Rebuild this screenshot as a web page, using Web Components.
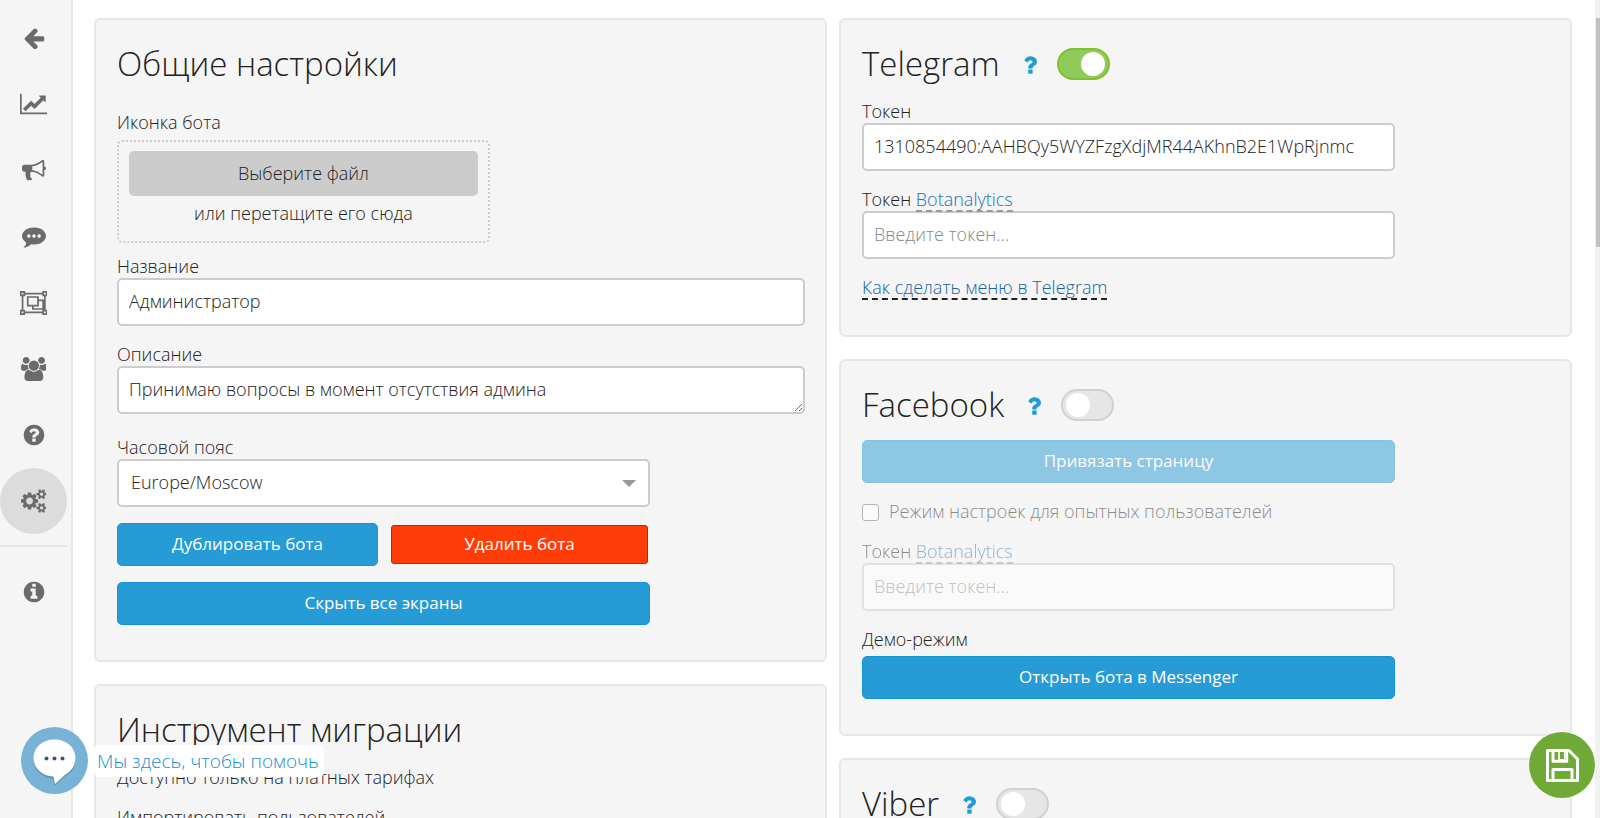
<!DOCTYPE html>
<html lang="ru">
<head>
<meta charset="utf-8">
<meta name="viewport" content="width=device-width, initial-scale=1">
<title>Настройки бота</title>
<style>
    body {
        margin: 0;
        font-family: 'Open Sans', 'Noto Sans', sans-serif;
        font-size: 18px;
        font-weight: 300;
        line-height: 24px;
        color: #222;
        background: #fff;
    }
</style>
</head>
<body>
<settings-page>
    <side-nav slot="nav"></side-nav>

    <settings-card slot="left" heading="Общие настройки">
        <file-drop label="Иконка бота"></file-drop>
        <text-field label="Название" value="Администратор" wide></text-field>
        <text-field label="Описание" value="Принимаю вопросы в момент отсутствия админа" multiline wide></text-field>
        <select-field label="Часовой пояс" value="Europe/Moscow"></select-field>
        <button-row>
            <action-button>Дублировать бота</action-button>
            <action-button kind="danger">Удалить бота</action-button>
        </button-row>
        <action-button>Скрыть все экраны</action-button>
    </settings-card>

    <settings-card slot="left" heading="Инструмент миграции">
        <text-line>Доступно только на платных тарифах</text-line>
        <text-line>Импортировать пользователей</text-line>
    </settings-card>

    <settings-card slot="right" heading="Telegram">
        <help-link slot="tools" topic="Telegram"></help-link>
        <toggle-switch slot="tools" label="Telegram" checked></toggle-switch>
        <text-field label="Токен" value="1310854490:AAHBQy5WYZFzgXdjMR44AKhnB2E1WpRjnmc"></text-field>
        <text-field label="Токен" placeholder="Введите токен..."><a href="#botanalytics">Botanalytics</a></text-field>
        <text-line><a href="#telegram-menu">Как сделать меню в Telegram</a></text-line>
    </settings-card>

    <settings-card slot="right" heading="Facebook">
        <help-link slot="tools" topic="Facebook"></help-link>
        <toggle-switch slot="tools" label="Facebook"></toggle-switch>
        <action-button disabled>Привязать страницу</action-button>
        <check-field label="Режим настроек для опытных пользователей" disabled></check-field>
        <text-field label="Токен" placeholder="Введите токен..." disabled><a href="#botanalytics">Botanalytics</a></text-field>
        <action-button caption="Демо-режим">Открыть бота в Messenger</action-button>
    </settings-card>

    <settings-card slot="right" heading="Viber">
        <help-link slot="tools" topic="Viber"></help-link>
        <toggle-switch slot="tools" label="Viber"></toggle-switch>
    </settings-card>

    <chat-widget slot="overlay">Мы здесь, чтобы помочь</chat-widget>
    <save-button slot="overlay"></save-button>
</settings-page>

<script>
// attach an open shadow root and fill it
function render(el, html) {
    const root = el.attachShadow({ mode: 'open' });
    const template = document.createElement('template');
    template.innerHTML = `<style>*, :host { box-sizing: border-box; } :host([hidden]) { display: none; }</style>${html}`;
    root.appendChild(template.content.cloneNode(true));
    return root;
}

// shared look of inputs, textareas and selects
const controlStyle = `
    label { display: block; height: 24px; color: #222; white-space: nowrap; }
    .control {
        display: block;
        width: 100%;
        height: 48px;
        margin: 0;
        padding: 9px 10px 11px;
        border: 2px solid #ccc;
        border-radius: 5px;
        background: #fff;
        color: #222;
        font: inherit;
        line-height: 24px;
    }
    .control::placeholder { color: #888; opacity: 1; }
`;

const icons = {
    back: ['0 0 1792 1792', 'M1664 896v128q0 53-32.5 90.5t-84.5 37.5h-704l293 294q38 36 38 90t-38 90l-75 76q-37 37-90 37-52 0-91-37l-651-652q-37-37-37-90 0-52 37-91l651-650q38-38 91-38 52 0 90 38l75 74q38 38 38 91t-38 91l-293 293h704q52 0 84.5 37.5t32.5 90.5z'],
    chart: ['0 0 2048 1792', 'M2048 1536v128h-2048v-1536h128v1408h1920zm-128-1248v435q0 21-19.5 29.5t-35.5-7.5l-121-121-633 633q-10 10-23 10t-23-10l-233-233-416 416-192-192 585-585q10-10 23-10t23 10l233 233 464-464-121-121q-16-16-7.5-35.5t29.5-19.5h435q14 0 23 9t9 23z'],
    horn: ['0 0 1792 1792', 'M1664 640q53 0 90.5 37.5t37.5 90.5-37.5 90.5-90.5 37.5v384q0 52-38 90t-90 38q-417-347-812-380-58 19-91 66t-31 100.5 40 92.5q-20 33-23 65.5t6 58 33.5 55 48 50 61.5 50.5q-29 58-111.5 83t-168.5 11.5-132-55.5q-7-23-29.5-87.5t-32-94.5-23-89-15-101 3.5-98.5 22-110.5h-122q-66 0-113-47t-47-113v-192q0-66 47-113t113-47h480q435 0 896-384 52 0 90 38t38 90v384zm-128 604v-954q-394 302-768 343v270q377 42 768 341z'],
    chat: ['0 0 1792 1792', 'M640 896q0-53-37.5-90.5t-90.5-37.5-90.5 37.5-37.5 90.5 37.5 90.5 90.5 37.5 90.5-37.5 37.5-90.5zm384 0q0-53-37.5-90.5t-90.5-37.5-90.5 37.5-37.5 90.5 37.5 90.5 90.5 37.5 90.5-37.5 37.5-90.5zm384 0q0-53-37.5-90.5t-90.5-37.5-90.5 37.5-37.5 90.5 37.5 90.5 90.5 37.5 90.5-37.5 37.5-90.5zm384 0q0 174-120 321.5t-326 233-450 85.5q-110 0-211-18-173 173-435 229-52 10-86 13-12 1-22-6t-13-18q-4-15 20-37 5-5 23.5-21.5t25.5-23.5 23.5-25.5 24-31.5 20.5-37 20-48 14.5-57.5 12.5-72.5q-146-90-229.5-216.5t-83.5-269.5q0-174 120-321.5t326-233 450-85.5 450 85.5 326 233 120 321.5z'],
    group: ['0 0 2048 1792', 'M2048 384h-128v1024h128v384h-384v-128h-1280v128h-384v-384h128v-1024h-128v-384h384v128h1280v-128h384v384zm-256-256v128h128v-128h-128zm-1664 0v128h128v-128h-128zm128 1536v-128h-128v128h128zm1408-128v-128h128v-1024h-128v-128h-1280v128h-128v1024h128v128h1280zm256 128v-128h-128v128h128zm-512-1024h384v768h-896v-256h-384v-768h896v256zm-768 384h640v-512h-640v512zm1024 256v-512h-256v384h-384v128h640z'],
    users: ['-64 0 1920 1792', 'M529 896q-162 5-265 128h-134q-82 0-138-40.5t-56-118.5q0-353 124-353 6 0 43.5 21t97.5 42.5 119 21.5q67 0 133-23-5 37-5 66 0 139 81 256zm1071 637q0 120-73 189.5t-194 69.5h-874q-121 0-194-69.5t-73-189.5q0-53 3.5-103.5t14-109 26.5-108.5 43-97.5 62-81 85.5-53.5 111.5-20q10 0 43 21.5t73 48 107 48 135 21.5 135-21.5 107-48 73-48 43-21.5q61 0 111.5 20t85.5 53.5 62 81 43 97.5 26.5 108.5 14 109 3.5 103.5zm-1024-1277q0 106-75 181t-181 75-181-75-75-181 75-181 181-75 181 75 75 181zm704 384q0 159-112.5 271.5t-271.5 112.5-271.5-112.5-112.5-271.5 112.5-271.5 271.5-112.5 271.5 112.5 112.5 271.5zm576 225q0 78-56 118.5t-138 40.5h-134q-103-123-265-128 81-117 81-256 0-29-5-66 66 23 133 23 59 0 119-21.5t97.5-42.5 43.5-21q124 0 124 353zm-128-609q0 106-75 181t-181 75-181-75-75-181 75-181 181-75 181 75 75 181z'],
    help: ['0 0 1792 1792', 'M1024 1376v-192q0-14-9-23t-23-9h-192q-14 0-23 9t-9 23v192q0 14 9 23t23 9h192q14 0 23-9t9-23zm256-672q0-88-55.5-163t-138.5-116-170-41q-243 0-371 213-15 24 8 42l132 100q7 6 19 6 16 0 25-12 53-68 86-92 34-24 86-24 48 0 85.5 26t37.5 59q0 38-20 61t-68 45q-63 28-115.5 86.5t-52.5 125.5v36q0 14 9 23t23 9h192q14 0 23-9t9-23q0-19 21.5-49.5t54.5-49.5q32-18 49-28.5t46-35 44.5-48 28-60.5 12.5-81zm384 192q0 209-103 385.5t-279.5 279.5-385.5 103-385.5-103-279.5-279.5-103-385.5 103-385.5 279.5-279.5 385.5-103 385.5 103 279.5 279.5 103 385.5z'],
    cogs: ['-64 0 1920 1792', 'M832 896q0-106-75-181t-181-75-181 75-75 181 75 181 181 75 181-75 75-181zm768 512q0-52-38-90t-90-38-90 38-38 90q0 53 37.5 90.5t90.5 37.5 90.5-37.5 37.5-90.5zm0-1024q0-52-38-90t-90-38-90 38-38 90q0 53 37.5 90.5t90.5 37.5 90.5-37.5 37.5-90.5zm-384 421v185q0 10-7 19.5t-16 10.5l-155 24q-11 35-32 76 34 48 90 115 7 11 7 20 0 12-7 19-23 30-82.5 89.5t-78.5 59.5q-11 0-21-7l-115-90q-37 19-77 31-11 108-23 155-7 24-30 24h-186q-11 0-20-7.5t-10-17.5l-23-153q-34-10-75-31l-118 89q-7 7-20 7-11 0-21-8-144-133-144-160 0-9 7-19 10-14 41-53t47-61q-23-44-35-82l-152-24q-10-1-17-9.5t-7-19.5v-185q0-10 7-19.5t16-10.5l155-24q11-35 32-76-34-48-90-115-7-11-7-20 0-12 7-20 22-30 82-89t79-59q11 0 21 7l115 90q34-18 77-32 11-108 23-154 7-24 30-24h186q11 0 20 7.5t10 17.5l23 153q34 10 75 31l118-89q8-7 20-7 11 0 21 8 144 133 144 160 0 8-7 19-12 16-42 54t-45 60q23 48 34 82l152 23q10 2 17 10.5t7 19.5zm640 533v140q0 16-149 31-12 27-30 52 51 113 51 138 0 4-4 7-122 71-124 71-8 0-46-47t-52-68q-20 2-30 2t-30-2q-14 21-52 68t-46 47q-2 0-124-71-4-3-4-7 0-25 51-138-18-25-30-52-149-15-149-31v-140q0-16 149-31 13-29 30-52-51-113-51-138 0-4 4-7 4-2 35-20t59-34 30-16q8 0 46 46.5t52 67.5q20-2 30-2t30 2q51-71 92-112l6-2q4 0 124 70 4 3 4 7 0 25-51 138 17 23 30 52 149 15 149 31zm0-1024v140q0 16-149 31-12 27-30 52 51 113 51 138 0 4-4 7-122 71-124 71-8 0-46-47t-52-68q-20 2-30 2t-30-2q-14 21-52 68t-46 47q-2 0-124-71-4-3-4-7 0-25 51-138-18-25-30-52-149-15-149-31v-140q0-16 149-31 13-29 30-52-51-113-51-138 0-4 4-7 4-2 35-20t59-34 30-16q8 0 46 46.5t52 67.5q20-2 30-2t30 2q51-71 92-112l6-2q4 0 124 70 4 3 4 7 0 25-51 138 17 23 30 52 149 15 149 31z'],
    info: ['0 0 1792 1792', 'M1152 1376v-160q0-14-9-23t-23-9h-96v-512q0-14-9-23t-23-9h-320q-14 0-23 9t-9 23v160q0 14 9 23t23 9h96v320h-96q-14 0-23 9t-9 23v160q0 14 9 23t23 9h448q14 0 23-9t9-23zm-128-896v-160q0-14-9-23t-23-9h-192q-14 0-23 9t-9 23v160q0 14 9 23t23 9h192q14 0 23-9t9-23zm640 416q0 209-103 385.5t-279.5 279.5-385.5 103-385.5-103-279.5-279.5-103-385.5 103-385.5 279.5-279.5 385.5-103 385.5 103 279.5 279.5 103 385.5z'],
    question: ['384 256 1024 1280', 'M1088 1256v240q0 16-12 28t-28 12h-240q-16 0-28-12t-12-28v-240q0-16 12-28t28-12h240q16 0 28 12t12 28zm316-600q0 54-15.5 101t-35 76.5-55 59.5-57.5 43.5-61 35.5q-41 23-68.5 65t-27.5 67q0 17-12 32.5t-28 15.5h-240q-15 0-25.5-18.5t-10.5-37.5v-45q0-83 65-156.5t143-108.5q59-27 84-56t25-76q0-42-46.5-74t-107.5-32q-65 0-108 29-35 25-107 115-13 16-31 16-12 0-25-8l-164-125q-13-10-15.5-25t5.5-28q160-266 464-266 80 0 161 31t146 83 106 127.5 41 158.5z']
};

function icon(name) {
    const [box, path] = icons[name];
    return `<svg viewBox="${box}" fill="currentColor" aria-hidden="true"><path d="${path}"/></svg>`;
}

class SettingsPage extends HTMLElement {
    constructor() {
        super();
        render(this, `
            <style>
                :host { display: flex; height: 100vh; overflow: hidden; }
                main {
                    flex: 1;
                    display: grid;
                    grid-template-columns: 1fr 1fr;
                    gap: 12px;
                    padding: 18px 23px 0 21px;
                    overflow: hidden;
                }
                .column { display: flex; flex-direction: column; gap: 22px; min-width: 0; }
                .track { width: 5px; padding: 18px 0 0 1px; background: #f1f1f1; }
                .thumb { height: 28vh; background: #c1c1c1; }
            </style>
            <slot name="nav"></slot>
            <main>
                <div class="column"><slot name="left"></slot></div>
                <div class="column"><slot name="right"></slot></div>
            </main>
            <div class="track"><div class="thumb"></div></div>
            <slot name="overlay"></slot>
        `);
    }
}

class SideNav extends HTMLElement {
    constructor() {
        super();
        const link = ([name, title]) => `<a href="#${name}" aria-label="${title}"${name === 'cogs' ? ' class="active"' : ''}>${icon(name)}</a>`;
        const top = [['back', 'Назад'], ['chart', 'Статистика'], ['horn', 'Рассылки'], ['chat', 'Диалоги']];
        const middle = [['group', 'Экраны'], ['users', 'Пользователи'], ['help', 'Помощь'], ['cogs', 'Настройки']];
        render(this, `
            <style>
                :host {
                    display: block;
                    flex: none;
                    width: 73px;
                    padding-top: 5px;
                    border-right: 2px solid #e7e7e7;
                    background: #f5f5f5;
                }
                nav { width: 67px; }
                div + div { margin-top: 1px; }
                a {
                    display: flex;
                    align-items: center;
                    justify-content: center;
                    height: 66px;
                    border-radius: 50%;
                    color: #6b6b6b;
                }
                .active { background: #dcdcdc; }
                svg { height: 24px; }
                hr { height: 2px; margin: 11px 0 12px; border: 0; background: #e4e4e4; }
            </style>
            <nav>
                <div>${top.map(link).join('')}</div>
                <div>${middle.map(link).join('')}</div>
                <hr>
                ${link(['info', 'О сервисе'])}
            </nav>
        `);
    }
}

class SettingsCard extends HTMLElement {
    constructor() {
        super();
        render(this, `
            <style>
                :host {
                    display: block;
                    padding: 20px 20px 35px 21px;
                    border: 2px solid #e7e7e7;
                    border-radius: 6px;
                    background: #f5f5f5;
                }
                header { display: flex; align-items: center; gap: 20px; height: 48px; margin-bottom: 11px; }
                h2 { margin: 0; font-size: 33px; font-weight: 300; line-height: 48px; white-space: nowrap; }
                .body { display: flex; flex-direction: column; gap: 16px; }
            </style>
            <header><h2>${this.getAttribute('heading')}</h2><slot name="tools"></slot></header>
            <div class="body"><slot></slot></div>
        `);
    }
}

class TextField extends HTMLElement {
    constructor() {
        super();
        const value = this.getAttribute('value') || '';
        const off = this.hasAttribute('disabled') ? 'disabled' : '';
        const control = this.hasAttribute('multiline')
            ? `<textarea id="control" class="control" rows="1">${value}</textarea>`
            : `<input id="control" class="control" type="text" value="${value}" placeholder="${this.getAttribute('placeholder') || ''}" ${off}>`;
        render(this, `
            <style>
                ${controlStyle}
                :host { display: block; max-width: 533px; }
                :host([wide]) { max-width: none; }
                :host([multiline]) { padding-bottom: 5px; }
                :host([disabled]) { opacity: .5; }
                label { position: relative; z-index: 1; }
                textarea { overflow: hidden; resize: both; }
                ::slotted(a) {
                    display: inline-block;
                    line-height: 22px;
                    color: #2272b4;
                    text-decoration: none;
                    border-bottom: 2px dashed #999;
                }
            </style>
            <label for="control">${this.getAttribute('label')} <slot></slot></label>
            ${control}
        `);
    }
}

class SelectField extends HTMLElement {
    constructor() {
        super();
        render(this, `
            <style>
                ${controlStyle}
                :host { display: block; max-width: 533px; }
                .box { display: grid; align-items: center; }
                .box > * { grid-area: 1 / 1; }
                select.control { appearance: none; padding: 0 12px 2px; }
                .arrow {
                    justify-self: end;
                    margin-right: 14px;
                    border: 7px solid transparent;
                    border-top-color: #999;
                    border-bottom: 0;
                    pointer-events: none;
                }
            </style>
            <label for="control">${this.getAttribute('label')}</label>
            <div class="box">
                <select id="control" class="control"><option>${this.getAttribute('value')}</option></select>
                <span class="arrow"></span>
            </div>
        `);
    }
}

class CheckField extends HTMLElement {
    constructor() {
        super();
        render(this, `
            <style>
                :host { display: block; }
                :host([disabled]) { opacity: .5; }
                label { display: flex; align-items: center; gap: 10px; color: #222; white-space: nowrap; }
                input {
                    appearance: none;
                    width: 17px;
                    height: 17px;
                    margin: 3px 0 0;
                    border: 1px solid #777;
                    border-radius: 3px;
                    background: #fff;
                }
            </style>
            <label><input type="checkbox" ${this.hasAttribute('disabled') ? 'disabled' : ''}>${this.getAttribute('label')}</label>
        `);
    }
}

class FileDrop extends HTMLElement {
    constructor() {
        super();
        const root = render(this, `
            <style>
                :host { display: block; max-width: 373px; padding-top: 11px; margin-bottom: -5px; }
                label { display: block; margin-bottom: 6px; color: #222; }
                .zone {
                    height: 103px;
                    padding: 9px 10px;
                    border: 2px dotted #ccc;
                    border-radius: 5px;
                    text-align: center;
                    color: #222;
                }
                button {
                    display: block;
                    width: 100%;
                    height: 45px;
                    margin-bottom: 5px;
                    padding: 0 0 2px;
                    border: 0;
                    border-radius: 5px;
                    background: #ccc;
                    color: #222;
                    font: inherit;
                }
            </style>
            <label for="pick">${this.getAttribute('label')}</label>
            <div class="zone">
                <button id="pick" type="button">Выберите файл</button>
                или перетащите его сюда
                <input type="file" hidden>
            </div>
        `);
        root.querySelector('button').addEventListener('click', () => root.querySelector('input').click());
    }
}

class ButtonRow extends HTMLElement {
    constructor() {
        super();
        render(this, `
            <style>
                :host { display: grid; grid-template-columns: 1fr 1fr; align-items: center; gap: 11px; max-width: 533px; }
            </style>
            <slot></slot>
        `);
    }
}

class ActionButton extends HTMLElement {
    constructor() {
        super();
        const caption = this.getAttribute('caption');
        render(this, `
            <style>
                :host { display: block; max-width: 533px; }
                :host([disabled]) { opacity: .5; }
                :host([kind="danger"]) { padding: 0 2px; }
                p { margin: 0 0 5px; color: #222; }
                button {
                    display: block;
                    width: 100%;
                    height: 43px;
                    padding: 0 0 2px;
                    border: 1px solid #1494d4;
                    border-radius: 5px;
                    background: #279bd5;
                    color: #fff;
                    font: inherit;
                    font-size: 17px;
                    font-weight: 500;
                }
                :host([kind="danger"]) button {
                    height: 39px;
                    border-color: #f01000;
                    border-radius: 3px;
                    background: #ff3d08;
                }
            </style>
            ${caption ? `<p>${caption}</p>` : ''}
            <button type="button" ${this.hasAttribute('disabled') ? 'disabled' : ''}><slot></slot></button>
        `);
    }
}

class TextLine extends HTMLElement {
    constructor() {
        super();
        render(this, `
            <style>
                :host { display: block; color: #222; }
                ::slotted(a) {
                    display: inline-block;
                    line-height: 22px;
                    color: #1a64a2;
                    text-decoration: none;
                    border-bottom: 2px dashed #222;
                }
            </style>
            <slot></slot>
        `);
    }
}

class HelpLink extends HTMLElement {
    constructor() {
        super();
        render(this, `
            <style>
                :host { display: block; padding: 2px 0 0 3px; }
                a { display: block; color: #1c9cd9; }
                svg { display: block; width: 14px; height: 18px; }
            </style>
            <a href="#help" aria-label="Справка ${this.getAttribute('topic')}">${icon('question')}</a>
        `);
    }
}

class ToggleSwitch extends HTMLElement {
    constructor() {
        super();
        render(this, `
            <style>
                :host { display: block; }
                input {
                    appearance: none;
                    display: flex;
                    align-items: center;
                    width: 53px;
                    height: 32px;
                    margin: 0;
                    padding: 0 3px;
                    border: 2px solid #d0d0d0;
                    border-radius: 16px;
                    background: #e6e6e6;
                }
                input::before {
                    content: '';
                    width: 24px;
                    height: 24px;
                    border-radius: 50%;
                    background: #fff;
                }
                input:checked {
                    justify-content: flex-end;
                    border-color: #7fc22c;
                    background: #8fca5a;
                }
            </style>
            <input type="checkbox" role="switch" aria-label="${this.getAttribute('label')}" ${this.hasAttribute('checked') ? 'checked' : ''}>
        `);
    }
}

class ChatWidget extends HTMLElement {
    constructor() {
        super();
        render(this, `
            <style>
                :host { position: fixed; left: 21px; bottom: 24px; z-index: 2; }
                button {
                    display: flex;
                    align-items: center;
                    gap: 6px;
                    padding: 0;
                    border: 0;
                    background: none;
                    color: #1a90d2;
                    font: inherit;
                    font-size: 19px;
                }
                svg { display: block; width: 67px; height: 67px; }
                span { padding: 4px 5px 4px 3px; border-radius: 5px; background: #fff; }
            </style>
            <button type="button">
                <svg viewBox="0 0 67 67" aria-hidden="true">
                    <circle cx="33.5" cy="33.5" r="33.5" fill="#78b2d6"/>
                    <path d="M33.5 14.5c11.800 0 21 8 21 18.500 0 7.500-4.500 13.500-10.500 16.500l-10.500 9.500-2-7.500c-10.500-.5-19-8.500-19-18.500 0-10.500 9.200-18.500 21-18.500z" fill="#50748c" opacity=".45"/>
                    <path d="M33.5 12.500c11.800 0 21 8 21 18.500 0 7.500-4.500 13.500-10.500 16.800l-10 9.200-1.500-7.500c-11-.3-20-8.200-20-18.500 0-10.500 9.200-18.500 21-18.500z" fill="#fff"/>
                    <g fill="#46516b"><circle cx="25.500" cy="31.500" r="2"/><circle cx="33.500" cy="31.500" r="2"/><circle cx="41.500" cy="31.500" r="2"/></g>
                </svg>
                <span><slot></slot></span>
            </button>
        `);
    }
}

class SaveButton extends HTMLElement {
    constructor() {
        super();
        render(this, `
            <style>
                :host { position: fixed; right: 5px; bottom: 20px; z-index: 2; }
                button {
                    display: flex;
                    align-items: center;
                    justify-content: center;
                    width: 66px;
                    height: 66px;
                    padding: 0;
                    border: 0;
                    border-radius: 50%;
                    background: #70aa36;
                }
                svg { width: 33px; height: 33px; }
            </style>
            <button type="button" aria-label="Сохранить">
                <svg viewBox="0 0 33 33" fill="none" stroke="#fff" stroke-width="3" stroke-linejoin="round" aria-hidden="true">
                    <path d="M1.5 1.5H23L31.500 10v21.500h-30z"/>
                    <path d="M7 2v10.200h13.700V2M7 31V20.500h19V31"/>
                    <path d="M12.200 3h7v8h-7z" fill="#fff" stroke="none"/>
                    <path d="M14 3h4v7h-4z" fill="#70aa36" stroke="none"/>
                </svg>
            </button>
        `);
    }
}

customElements.define('settings-page', SettingsPage);
customElements.define('side-nav', SideNav);
customElements.define('settings-card', SettingsCard);
customElements.define('text-field', TextField);
customElements.define('select-field', SelectField);
customElements.define('check-field', CheckField);
customElements.define('file-drop', FileDrop);
customElements.define('button-row', ButtonRow);
customElements.define('action-button', ActionButton);
customElements.define('text-line', TextLine);
customElements.define('help-link', HelpLink);
customElements.define('toggle-switch', ToggleSwitch);
customElements.define('chat-widget', ChatWidget);
customElements.define('save-button', SaveButton);
</script>
</body>
</html>
